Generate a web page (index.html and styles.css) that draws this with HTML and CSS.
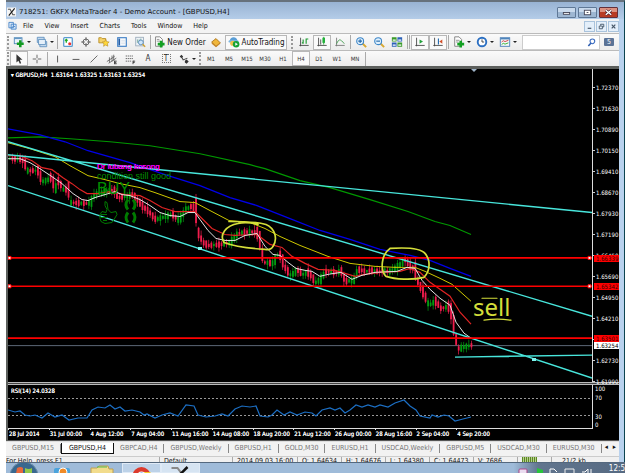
FILE: index.html
```html
<!DOCTYPE html>
<html lang="en">
<head>
<meta charset="utf-8">
<title>718251: GKFX MetaTrader 4</title>
<link rel="stylesheet" href="styles.css">
</head>
<body>
<div class="window">
  <header class="titlebar">
    <svg class="logo" viewBox="0 0 10 10"><rect width="10" height="10" fill="#f6f6f6"/><path d="M1 2h2.5l3 6H9" fill="none" stroke="#555" stroke-width="1.2"/><path d="M8.5 1L2 9" stroke="#111" stroke-width="1.2"/></svg>
    <h1>718251: GKFX MetaTrader 4 - Demo Account - [GBPUSD,H4]</h1>
    <div class="winbtns">
      <button aria-label="Minimize"><svg viewBox="0 0 18 10"><rect x="5.5" y="5" width="7" height="2" fill="#fff" stroke="#445"/></svg></button>
      <button aria-label="Maximize"><svg viewBox="0 0 18 10"><rect x="5.5" y="2.500" width="7" height="5" fill="#fff" stroke="#445"/><rect x="8" y="4.500" width="2" height="1" fill="#445"/></svg></button>
      <button class="close" aria-label="Close"><svg viewBox="0 0 18 10"><path d="M6 2.500l6 5M12 2.500l-6 5" stroke="#423" stroke-width="3"/><path d="M6 2.500l6 5M12 2.500l-6 5" stroke="#fff" stroke-width="1.600"/></svg></button>
    </div>
  </header>
  <div class="client">
    <nav class="menu">
      <svg class="logo" viewBox="0 0 10 10"><path d="M1 1h5v6H1zM3.500 3h5.500v5.500H3.500z" fill="#dcebfa" stroke="#4a86c8"/><path d="M4.500 7l1.500-2 2 1" stroke="#4a86c8" fill="none"/></svg>
      <button>File</button><button>View</button><button>Insert</button><button>Charts</button><button>Tools</button><button>Window</button><button>Help</button>
      <div class="mdi">
        <button aria-label="Minimize chart"><svg viewBox="0 0 10 10"><path d="M3 7h4" stroke="#456" stroke-width="1.300"/></svg></button>
        <button aria-label="Restore chart"><svg viewBox="0 0 10 10"><path d="M4 4V2.500h3.500V5.500H6.500M2.500 4.500h3.500v3H2.500z" stroke="#456" fill="none"/></svg></button>
        <button aria-label="Close chart"><svg viewBox="0 0 10 10"><path d="M3 3l4 4M7 3L3 7" stroke="#456" stroke-width="1.300"/></svg></button>
      </div>
    </nav>
    <div class="toolbar">
      <i class="grip"></i>
      <button class="tool drop" aria-label="New chart"><svg viewBox="0 0 14 14"><rect x="1.500" y="2" width="9" height="7" fill="#e8f2fb" stroke="#4a86b8"/><path d="M2 3h8" stroke="#4a86b8"/><path d="M8.500 5v8M4.500 9h8" stroke="#129a22" stroke-width="3"/></svg></button>
      <button class="tool drop" aria-label="Profiles"><svg viewBox="0 0 14 14"><path d="M1.500 1.500h8v6h-8zM4.500 6.500h8v6h-8z" fill="#c9ddf0" stroke="#5c8fbd"/><path d="M3 4h8v6H3z" fill="#e5f0fa" stroke="#5c8fbd"/></svg></button>
      <i class="sep"></i>
      <button class="tool" aria-label="Market Watch"><svg viewBox="0 0 14 14"><rect x="2" y="2" width="10" height="10" rx="1" fill="#fff" stroke="#5b9bd0" stroke-width="1.500"/><path d="M5 8V4M3.500 5.500L5 4l1.500 1.500" stroke="#2a2" stroke-width="1.500" fill="none"/><circle cx="9" cy="9" r="1.800" fill="#e33"/></svg></button>
      <button class="tool" aria-label="Data Window"><svg viewBox="0 0 14 14"><circle cx="7" cy="7" r="3.500" fill="none" stroke="#555"/><path d="M7 1.500v4M7 8.500v4M1.500 7h4M8.500 7h4" stroke="#555" stroke-width="1.200"/></svg></button>
      <button class="tool" aria-label="Navigator"><svg viewBox="0 0 14 14"><path d="M1 2h3l1 1h4v5H1z" fill="#f5d26a" stroke="#b78a20"/><path d="M9 4l1.200 2.600 2.800.4-2 2 .5 2.900L9 10.500 6.500 12l.5-3-2-2 2.800-.4z" fill="#ffd83a" stroke="#b78a20" stroke-width=".7"/></svg></button>
      <button class="tool" aria-label="Terminal"><svg viewBox="0 0 14 14"><rect x="2" y="2" width="10" height="10" fill="#fff" stroke="#3a7cc4" stroke-width="1.300"/><path d="M3.800 3v8" stroke="#245ea6" stroke-width="2"/><path d="M6 5h5M6 7h5M6 9h5" stroke="#c9d5e2" stroke-width=".8"/></svg></button>
      <button class="tool" aria-label="Strategy Tester"><svg viewBox="0 0 14 14"><rect x="2" y="1.500" width="9" height="10" fill="#eef3f8" stroke="#9aabba"/><path d="M4 8V4M6 9V4M8 7V3" stroke="#7a9"/><circle cx="8" cy="7.500" r="2.800" fill="#cfe6fa" stroke="#5588b8"/><path d="M10 9.500l3 3" stroke="#d0a030" stroke-width="1.600"/></svg></button>
      <i class="sep"></i>
      <button class="tool wide"><svg viewBox="0 0 14 14"><path d="M3 1h5l3 3v8H3z" fill="#fff" stroke="#777"/><path d="M4.500 4h3M4.500 6h4" stroke="#888"/><path d="M9.500 5.500v8M5.500 9.500h8" stroke="#12a022" stroke-width="3"/></svg>New Order</button>
      <button class="tool" aria-label="MetaEditor"><svg viewBox="0 0 14 14"><path d="M2 7l5-4 5 5-5 4z" fill="#f0b63a" stroke="#a8701a"/><path d="M2 7v2l5 4 5-4V8l-5 4z" fill="#c88420"/></svg></button>
      <button class="tool auto on"><svg viewBox="0 0 14 14"><path d="M2 6c0-6 9-6 9 0z" fill="#5a9ed6"/><ellipse cx="6.500" cy="6.300" rx="6" ry="1.700" fill="#79b5e3"/><circle cx="5.500" cy="8.500" r="3" fill="#edc24c"/><circle cx="9.500" cy="9.500" r="3.800" fill="#16a333"/><path d="M8.500 7.500v4l3-2z" fill="#fff"/></svg>AutoTrading</button>
      <i class="grip gap"></i>
      <button class="tool" aria-label="Bar chart"><svg viewBox="0 0 14 14"><path d="M3 2v10M1.500 11h11" stroke="#444"/><path d="M6 4v5M6 8H4.500M9.500 3v6M9.500 3.500H12" stroke="#1b9a2e" stroke-width="1.300"/></svg></button>
      <button class="tool on" aria-label="Candlesticks"><svg viewBox="0 0 14 14"><path d="M3 2v10M1.500 11h11M5.500 4v6" stroke="#444"/><path d="M9 1v9" stroke="#1b9a2e"/><rect x="7.500" y="2" width="3" height="6" fill="#22b13a"/></svg></button>
      <button class="tool" aria-label="Line chart"><svg viewBox="0 0 14 14"><path d="M3 2v10M1.500 11h11" stroke="#777"/><path d="M3 9c3-6 4-6 9 0" fill="none" stroke="#3a9a48"/></svg></button>
      <i class="sep"></i>
      <button class="tool" aria-label="Zoom in"><svg viewBox="0 0 14 14"><path d="M8.500 8.500L13 13" stroke="#d8a830" stroke-width="2.200"/><circle cx="6" cy="6" r="4" fill="#dff0fd" stroke="#3c86c8" stroke-width="1.300"/><path d="M6 3.800v4.400M3.800 6h4.400" stroke="#2468a8" stroke-width="1.300"/></svg></button>
      <button class="tool" aria-label="Zoom out"><svg viewBox="0 0 14 14"><path d="M8.500 8.500L13 13" stroke="#d8a830" stroke-width="2.200"/><circle cx="6" cy="6" r="4" fill="#dff0fd" stroke="#3c86c8" stroke-width="1.300"/><path d="M3.800 6h4.400" stroke="#2468a8" stroke-width="1.300"/></svg></button>
      <button class="tool" aria-label="Tile windows"><svg viewBox="0 0 14 14"><path d="M1 1.500h5.500v5H1zM7.500 7.500H13v5H7.500z" fill="#3a9a2a"/><path d="M7.500 1.500H13v5H7.500zM1 7.500h5.500v5H1z" fill="#2c62b8"/><path d="M2 4h3.500v1.500H2zM8.500 4H12v1.500H8.500zM2 10h3.500v1.500H2zM8.500 10H12v1.500H8.500z" fill="#fff"/></svg></button>
      <i class="sep dbl"></i>
      <button class="tool on" aria-label="Auto scroll"><svg viewBox="0 0 14 14"><path d="M3 2v10M1.500 11h11" stroke="#444"/><path d="M6.500 4v5l4-2.500z" fill="#22a13a"/></svg></button>
      <button class="tool on" aria-label="Chart shift"><svg viewBox="0 0 14 14"><path d="M3 2v10M1.500 11h11" stroke="#444"/><path d="M7.500 3v7" stroke="#246cb0" stroke-width="1.300"/><path d="M12 4v5L8.500 6.500z" fill="#d2502a"/></svg></button>
      <i class="sep"></i>
      <button class="tool drop" aria-label="Indicators"><svg viewBox="0 0 14 14"><path d="M2 1h5l3 3v8H2z" fill="#fff" stroke="#777"/><path d="M3.500 5h4M3.500 7h3" stroke="#888"/><path d="M9 5.500v8M5 9.500h8" stroke="#12a022" stroke-width="3"/></svg></button>
      <button class="tool drop" aria-label="Periods"><svg viewBox="0 0 14 14"><circle cx="7" cy="7" r="5" fill="#fff" stroke="#2b6fc2" stroke-width="2.200"/><path d="M7 4v3h2.500" fill="none" stroke="#333"/></svg></button>
      <button class="tool drop" aria-label="Templates"><svg viewBox="0 0 14 14"><rect x="1.500" y="2" width="11" height="10" fill="#f4f8fc" stroke="#3f79b5"/><path d="M2 3.200h10" stroke="#3f79b5" stroke-width="1.500"/><path d="M3 7l2-1.500 2 1L11 5" stroke="#c33" fill="none"/><path d="M3 10l2-1.500 2 1L11 8" stroke="#2a2" fill="none"/></svg></button>
      <label class="search"><input type="text" aria-label="Search"><svg viewBox="0 0 10 10"><path d="M4.500 5.500L1.500 9" stroke="#2c5cb0" stroke-width="1.700"/><circle cx="6" cy="3.700" r="2.600" fill="#fff" stroke="#3c6cc0" stroke-width="1.200"/></svg></label>
      <button class="news" aria-label="Messages">5</button>
    </div>
    <div class="toolbar second">
      <i class="grip"></i>
      <button class="tool on" aria-label="Cursor"><svg viewBox="0 0 14 14"><path d="M4 1.500l7 6.500H8l1.500 4-1.500.6L6.300 9 4 11z" fill="#333"/></svg></button>
      <button class="tool" aria-label="Crosshair"><svg viewBox="0 0 14 14"><path d="M7 2v4M7 8v4M2 7h4M8 7h4" stroke="#555"/></svg></button>
      <i class="sep"></i>
      <button class="tool" aria-label="Vertical line"><svg viewBox="0 0 14 14"><path d="M6.500 3v8" stroke="#444"/></svg></button>
      <button class="tool" aria-label="Horizontal line"><svg viewBox="0 0 14 14"><path d="M3 7.500h8" stroke="#444"/></svg></button>
      <button class="tool" aria-label="Trendline"><svg viewBox="0 0 14 14"><path d="M3 11l8-8" stroke="#555"/></svg></button>
      <button class="tool" aria-label="Channel"><svg viewBox="0 0 14 14"><path d="M1 10l9-6M3 12l9-6M4 5v6M7 3v7M9 2v7" stroke="#555" stroke-width=".9"/><path d="M10 9.500h2.500M10 11h2M10 12.500h2.500M10 9v4" stroke="#222" stroke-width=".9"/></svg></button>
      <button class="tool" aria-label="Fibonacci"><svg viewBox="0 0 14 14"><path d="M2 3.500h9M2 6.500h9M2 9.500h7" stroke="#555" stroke-dasharray="1.500 .8"/><path d="M10.500 9v4M10.500 9.500h2.500M10.500 11h2" stroke="#222" stroke-width=".9"/></svg></button>
      <button class="tool glyph">A</button>
      <button class="tool glyph"><span class="tbox">T</span></button>
      <button class="tool drop" aria-label="Arrows"><svg viewBox="0 0 14 14"><path d="M2 4l2-2 2 2-2 2zM8 9l2-1.500L12.500 10 10 12.500 8 11z" fill="#333"/><path d="M4 4l2 4 5-2" fill="none" stroke="#444" stroke-width="1.200"/></svg></button>
      <i class="grip"></i>
      <button class="tool tf">M1</button><button class="tool tf">M5</button><button class="tool tf">M15</button><button class="tool tf">M30</button><button class="tool tf">H1</button><button class="tool tf on">H4</button><button class="tool tf">D1</button><button class="tool tf">W1</button><button class="tool tf">MN</button>
      <i class="sep"></i>
    </div>

    <main class="chart">
      <section class="plot">
        <svg viewBox="8 69 584 314" preserveAspectRatio="none" fill="none">
          <path d="M8 346.500H592" stroke="#5d6876"/>
          <g id="candles"></g>
          <path d="M8 138L40 137L70 139L110 142L150 146L200 154L250 165L265 169L300 181L330 188L370 200L408 212L435 222L450 226L471 235" stroke="#009800" stroke-width="1.200"/>
          <path d="M8 129L40 135L65 142L88 151L130 163L165 175L200 186L230 198L257 206L290 219L320 231L350 240L380 250L410 256L430 261L450 269L471 277" stroke="#0000e8" stroke-width="1.300"/>
          <path d="M8 143L30 149L55 157L70 166L88 176L105 180L120 184L140 188L155 193L180 202L195 203L210 211L229 221L250 223L265 229L280 237L300 246L328 257L350 264L375 267L395 268L415 268L425 272L440 279L452 285L471 302" stroke="#cfc800"/>
          <path d="M8 156L20 156L32 161L42 168L52 170L63 178L72 184L80 190L87 194L98 194L110 192L125 195L140 196L150 201L162 208L175 212L195 212L203 220L212 229L225 235L235 236L257 235L270 245L282 248L292 257L305 264L318 270L335 271L345 274L355 277L365 275L380 273L400 272L410 269L420 273L430 283L440 290L450 297L460 313L471 325" stroke="#e02424" stroke-width="1.200"/>
          <path d="M8 159L20 159L30 163L40 169L52 177L62 184L73 194L82 200L88 201L95 198L105 195L115 192L122 195L130 196L140 200L150 206L160 213L170 216L180 217L188 213L195 213L200 220L208 231L216 239L225 241L235 241L245 236L257 234L265 247L273 255L280 256L288 263L296 269L305 271L312 272L320 277L328 275L341 273L352 280L362 276L375 273L397 272L407 268L415 269L422 281L430 290L440 299L450 306L456 323L464 334L471 339" stroke="#e4e4e4"/>
          <path d="M8 142L592 317M8 155L592 213M8 186L592 379M455 358L592 356" stroke="#48e6dc" stroke-width="1.400"/>
          <path d="M8 258.500H592M8 287H592M8 339H592" stroke="#f00" stroke-width="1.600"/>
          <path d="M8 257h3v3H8zM8 285.500h3v3H8zM588 257h3v3h-3zM588 285.500h3v3h-3z" fill="#fff" stroke="#f00"/>
          <path d="M198 247.500h4v3h-4zM532 359h4v3h-4z" fill="#7ff6ee"/>
          <path d="M471 69h6l-3 3z" fill="#9fb4c8"/>
          <g stroke="#d4de3a" stroke-width="1.700" stroke-linecap="round">
            <path d="M229 222C240 222 256 222 266 225C275 229 278 239 273 247Q271 251 265 250C250 249 232 246 224 243C219 235 226 226 238 224Q247 222 258 225"/>
            <path d="M390 249C405 248 420 248 425 254C431 261 430 272 424 278C412 281 395 280 386 277C380 271 381 255 390 249Z"/>
            <path d="M482 299H497M484 321Q497 319 511 321" stroke-width="1.200"/>
          </g>
          <path d="M105 202l2 1l1 7l3 3l5-1l1 3l-3 5l-2 3l-7 1l-4-2l-1-3v-4l2-3l4 1l1-3l-2-4zM101 215h6M101 218h6M103 221h4" stroke="#007a00"/>
          <path d="M128 200q-4 5 0 10M133 200q4 5 0 10M128 213q-4 5 0 10M133 213q4 5 0 10" stroke="#007a00" stroke-width="3"/>
        </svg>
        <p class="quote"><b>▾</b> GBPUSD,H4&nbsp; 1.63164 1.63325 1.63163 1.63254</p>
        <p class="note lubang">Dr lubang kosong</p>
        <p class="note cond">condition still good</p>
        <p class="note buy">BUY</p>
        <p class="note sell">sell</p>
      </section>
      <div class="prices">
        <span>1.72370</span><span>1.71630</span><span>1.70890</span><span>1.70150</span><span>1.69410</span><span>1.68670</span><span>1.67930</span><span>1.67190</span><span>1.66450</span><span>1.65690</span><span>1.64950</span><span>1.64210</span><span></span><span>1.62730</span><span>1.61990</span>
        <em class="tag r1">1.66339</em><em class="tag r2">1.65342</em><em class="tag r3">1.63501</em><em class="tag now">1.63254</em>
      </div>
      <div class="divider"></div>
      <section class="rsi">
        <svg viewBox="8 386 584 43" preserveAspectRatio="none" fill="none">
          <path d="M8 399.500H592M8 416.500H592" stroke="#999" stroke-dasharray="2 2"/>
          <path d="M8 411L15 413L20 412L25 416L30 417L35 416L42 419L48 414L55 418L62 416L69 421L78 419L87 419L92 411L98 408L105 409L110 406L115 410L120 408L125 412L132 411L140 413L144 416L147 415L155 419L162 416L170 414L178 417L186 406L194 407L198 416L206 418L215 417L222 415L228 417L235 410L242 407L250 408L256 407L260 417L268 418L272 416L277 411L284 416L290 413L297 416L305 413L312 414L316 417L322 411L330 409L335 411L340 409L345 414L350 411L356 406L362 408L368 406L375 408L380 406L388 408L395 404L404 401L410 407L416 411L420 417L430 419L432 416L438 418L444 416L449 417L455 422L463 420L471 418" stroke="#1c6fc4" stroke-width="1.200"/>
        </svg>
        <p class="quote">RSI(14) 24.0328</p>
      </section>
      <div class="levels"><span>100</span><span>70</span><span>30</span><span>0</span></div>
      <div class="times"><span>28 Jul 2014</span><span>31 Jul 00:00</span><span>4 Aug 12:00</span><span>7 Aug 04:00</span><span>11 Aug 16:00</span><span>14 Aug 08:00</span><span>18 Aug 20:00</span><span>21 Aug 12:00</span><span>26 Aug 00:00</span><span>28 Aug 16:00</span><span>2 Sep 04:00</span><span>4 Sep 20:00</span></div>
    </main>

    <nav class="tabs">
      <button>GBPUSD,M15</button><button class="active">GBPUSD,H4</button><button>GBPCAD,H4</button><button>GBPUSD,Weekly</button><button>GBPUSD,H1</button><button>GOLD,M30</button><button>EURUSD,H1</button><button>USDCAD,Weekly</button><button>GBPUSD,M5</button><button>USDCAD,M30</button><button>EURUSD,M30</button>
      <div class="scroll"><button aria-label="Previous tabs">◂</button><button aria-label="Next tabs">▸</button></div>
    </nav>
    <footer class="status">
      <span class="help">For Help, press F1</span><span class="prof">Default</span><span class="date">2014.09.03 16:00</span><span>O: 1.64634</span><span>H: 1.64676</span><span>L: 1.64380</span><span>C: 1.64473</span><span>V: 7686</span><span class="bars"><i></i></span><span class="net">21/2 kb</span>
    </footer>
  </div>
</div>
<div class="taskbar">
  <svg class="orb" viewBox="0 0 34 11"><circle cx="17" cy="13" r="14" fill="#39688f" stroke="#6c8ba6"/><path d="M10 5q4-2 6 0v6h-7z" fill="#e8683c"/><path d="M18 5q4 2 7 0v6h-7z" fill="#93c94a"/></svg>
  <svg class="app" viewBox="0 0 34 11"><rect x="9" y="5" width="16" height="9" rx="2" fill="#4ba3dc"/><circle cx="18" cy="9" r="4" fill="#f08b28" stroke="#fff"/></svg>
  <svg class="app" viewBox="0 0 34 11"><path d="M6 5h6l2-2h9l1 3h4v8H6z" fill="#f2dc8c" stroke="#bfa050"/><path d="M12 4h10" stroke="#5b5"/></svg>
  <span class="running"><svg viewBox="0 0 34 11"><circle cx="17" cy="12" r="9" fill="#dc3a2c"/><path d="M8 11q3-2 5 0z" fill="#3aa648"/><path d="M18 8h8v4h-8z" fill="#f6c92c"/><circle cx="17" cy="12" r="4.500" fill="#fff"/><circle cx="17" cy="12" r="3.500" fill="#3c7ce0"/></svg></span>
  <span class="running lit"><svg viewBox="0 0 34 11"><path d="M8 4h6l6 8" fill="none" stroke="#888" stroke-width="2"/><path d="M24 3l-9 9" stroke="#111" stroke-width="2.500"/></svg></span>
  <div class="tray">
    <svg viewBox="0 0 80 11"><rect x="2" y="6" width="8" height="6" rx="1" fill="#eadcf0" stroke="#a48"/><path d="M20 5l6 2v5h-6z" fill="#28c43c"/><path d="M33 11V6h4l3 3" stroke="#fff" fill="none"/><path d="M48 6h9v6h-9z" fill="none" stroke="#eee"/><path d="M65 9h3l3-3v6M74 6v5" stroke="#fff" fill="none"/></svg>
    <time>12:5</time>
  </div>
</div>
<script src="chart.js"></script>
</body>
</html>
```
FILE: chart.js
```js
// Mid-price path as [x, y] in plot units; candles are sampled along it.
const path = [[9,159],[20,159],[24,163],[26,171],[38,171],[41,182],[48,180],[51,176],[54,191],[58,180],[62,190],[68,190],[70,203],[85,204],[90,203],[94,195],[105,192],[113,190],[118,198],[125,197],[132,195],[140,205],[148,212],[155,220],[165,217],[172,215],[178,221],[185,210],[190,207],[195,209],[197,232],[202,243],[208,246],[220,245],[230,243],[237,234],[250,232],[258,234],[260,248],[263,263],[273,264],[276,256],[280,256],[284,268],[290,276],[297,271],[302,275],[308,273],[315,283],[320,280],[325,272],[335,273],[341,272],[344,282],[353,281],[357,270],[365,272],[370,271],[378,272],[390,272],[400,265],[404,260],[410,267],[415,271],[417,282],[423,294],[428,306],[435,302],[440,309],[445,308],[449,307],[452,320],[454,336],[458,350],[463,348],[471,346]];
const SVG = "http://www.w3.org/2000/svg";
const layer = document.getElementById("candles");
const mid = x => {
  const i = Math.max(1, path.findIndex(p => p[0] >= x));
  const [a, b] = [path[i - 1], path[i]];
  return a[1] + (b[1] - a[1]) * (x - a[0]) / (b[0] - a[0]);
};
const shape = (x, y, w, h, fill) => {
  const r = document.createElementNS(SVG, "rect");
  Object.entries({ x, y, width: w, height: h, fill }).forEach(([k, v]) => r.setAttribute(k, v));
  layer.append(r);
};
for (let n = 0, x = 9; x < 471; n++, x += 2.55) {
  const y = mid(x), step = mid(Math.min(x + 2.5, 471)) - y;
  const body = 2 + Math.abs(step) + (n * 7 % 5);
  const wick = body + 2 + (n * 11 % 7);
  const up = step < -0.6 || (Math.abs(step) < 1 && n * 5 % 7 < 2);
  const color = up ? "#009a10" : "#f01c4c";
  shape(x + 0.5, y - wick / 2 + (n % 3) - 1, 0.7, wick, color);
  shape(x, y - body / 2, 1.8, body, color);
}
```
FILE: styles.css
```css
* { box-sizing: border-box; margin: 0; padding: 0; }
body {
  height: 100vh; overflow: hidden; display: flex; flex-direction: column;
  background: #fff; color: #111;
  font: 7px/9px "DejaVu Sans Condensed", "DejaVu Sans", sans-serif;
}
button { font: inherit; color: inherit; background: none; border: 0; white-space: nowrap; }
svg { display: block; }
.window {
  flex: 1; min-height: 0; margin-left: 6px; display: flex; flex-direction: column;
  border-top: 2px solid #66717c; border-right: 1px solid #0d4450; background: #b9d2ee;
}
.titlebar {
  height: 17px; flex: none; display: flex; align-items: center; gap: 3px; padding: 3px 6px 0 1px;
  background: linear-gradient(#98b3d3, #b4cce8);
}
.logo { width: 9px; height: 10px; }
.titlebar h1 { flex: 1; font: 7px/10px "DejaVu Sans", sans-serif; white-space: nowrap; }
.winbtns { display: flex; gap: 2px; }
.winbtns button {
  width: 19px; height: 11px; border: 1px solid #5f7896; border-radius: 1px;
  background: linear-gradient(#c8d9ec 50%, #9db6d2 50%);
}
.winbtns .close { border-color: #64303a; background: linear-gradient(#dc9080 50%, #b83a24 50%); }
.winbtns svg { width: 100%; height: 9px; }
.client { flex: 1; min-height: 0; display: flex; flex-direction: column; margin-right: 5px; background: #f0f0f0; }
.menu { height: 14px; flex: none; display: flex; align-items: center; padding-left: 2px; background: #f3f3f3; }
.menu > button { padding: 0 5px 0 6px; }
.mdi { margin-left: auto; display: flex; gap: 1px; }
.mdi button { width: 11px; height: 11px; border: 1px solid #a9c3dc; background: #e4effa; }
.mdi svg { width: 9px; height: 9px; }
.toolbar { height: 17px; flex: none; display: flex; align-items: center; border-top: 1px solid #bbb; background: linear-gradient(#fafafa, #ececec); }
.second { height: 16px; }
.grip { width: 2px; height: 13px; margin: 0 1px; border-left: 2px dotted #999; flex: none; }
.gap { margin: 0 2px 0 4px; }
.sep { width: 1px; height: 14px; margin: 0 1px; background: #aaa; flex: none; }
.dbl { width: 3px; background: none; border: solid #aaa; border-width: 0 1px; }
.tool { width: 18px; height: 15px; flex: none; display: flex; align-items: center; justify-content: center; }
.tool svg { width: 12px; height: 12px; flex: none; }
.on { border: 1px solid #b8b8b8; background: #fafafa; }
.drop { width: 23px; gap: 2px; }
.drop::after { content: ""; border: 2px solid transparent; border-top-color: #222; border-bottom: 0; }
.wide { width: 55px; gap: 2px; font-size: 8px; }
.auto { width: 62px; gap: 2px; font-size: 8px; }
.tf { font-size: 6px; color: #333; }
.glyph { font-size: 8px; color: #333; }
.tbox { border: 1px dotted #777; width: 9px; height: 9px; line-height: 8px; }
.search { flex: 1; min-width: 0; margin-left: 3px; height: 15px; display: flex; align-items: center; padding-right: 3px; background: #fff; border: 1px solid #ccc; }
.search input { flex: 1; width: 0; min-width: 0; border: 0; background: none; font: inherit; outline: 0; }
.search svg { width: 9px; height: 9px; flex: none; }
.news { width: 10px; height: 8px; margin: 0 5px 0 4px; flex: none; background: #5b7396; color: #fff; line-height: 8px; border-radius: 1px; }

.chart {
  flex: 1; min-height: 0; display: grid;
  grid-template: minmax(0, 1fr) 3px 43px 13px / minmax(0, 1fr) 26px;
  background: #000; color: #fff; border: solid #5c5f5c; border-width: 3px 0 0 2px;
}
.plot, .rsi { position: relative; border-right: 1px solid #ddd; }
.plot svg, .rsi svg { position: absolute; width: 100%; height: 100%; }
.quote { position: absolute; left: 3px; top: 1px; font-size: 6px; white-space: nowrap; text-shadow: 0 0 #fff; }
.note { position: absolute; white-space: nowrap; font-family: "Liberation Sans", sans-serif; }
.lubang { left: 89px; top: 93px; color: #f0f; font-size: 8px; text-shadow: 0 0 #f0f; }
.cond { left: 89px; top: 103px; color: #009000; font-size: 9px; }
.buy { left: 89px; top: 112px; color: #009000; font-size: 16px; line-height: 15px; }
.sell { left: 465px; top: 223px; color: #d4de3a; font: 24px/30px "Noto Sans", sans-serif; }
.prices { position: relative; padding-top: 8px; display: flex; flex-direction: column; font-size: 6px; }
.prices span { height: 21px; line-height: 21px; flex: none; }
.prices span:last-of-type { height: 17px; }
.prices span::before { content: ""; display: inline-block; width: 2px; height: 1px; margin-right: 1px; vertical-align: 2px; background: #ccc; }
.tag { position: absolute; left: 1px; right: 0; height: 7px; padding-left: 2px; line-height: 7px; font-style: normal; background: #f00; color: #300; }
.r1 { top: 186px; }
.r2 { top: 214px; }
.r3 { top: 266px; }
.now { top: 273px; background: #fff; color: #000; }
.divider { grid-column: 1 / -1; border: solid #bbb; border-width: 1px 0; background: #444; }
.levels { padding-left: 2px; font-size: 6px; display: grid; grid-template-rows: 9px 17px 10px 7px; line-height: 8px; }
.levels span:nth-child(3) { align-self: end; }
.times {
  grid-column: 1 / -1; display: grid; grid-template-columns: repeat(12, minmax(0, 1fr));
  padding-right: 122px; font-size: 6px; line-height: 11px; white-space: nowrap;
  border-bottom: 1px solid #555; background: linear-gradient(90deg, #ddd, #ddd) 0 0 / calc(100% - 26px) 1px no-repeat;
}
.times span { text-shadow: 0 0 #fff; border-left: 1px solid transparent; border-image: linear-gradient(#ddd 20%, transparent 20%) 1; }

.tabs { height: 15px; flex: none; display: flex; align-items: flex-start; padding-top: 1px; background: #f2f2f2; border-top: 1px solid #ddd; color: #777; }
.tabs > button { height: 11px; padding: 0 6px; border-right: 1px solid transparent; border-image: linear-gradient(transparent 20%, #888 20%, #888 80%, transparent 80%) 1; }
.tabs .active { padding: 0 7px; background: #fff; color: #111; border: 1px solid #111; border-top: 0; border-image: none; }
.scroll { margin-left: auto; display: flex; gap: 5px; padding-right: 3px; color: #111; }
.status { height: 6px; flex: none; overflow: hidden; display: flex; line-height: 8px; border-top: 1px solid #ccc; white-space: nowrap; }
.status span { width: 44px; padding-left: 4px; border-right: 1px solid #aaa; }
.status .help { width: 154px; padding-left: 0; }
.status .prof { width: 73px; }
.status .date { width: 65px; }
.status .bars { width: 34px; }
.bars i { display: block; width: 15px; height: 6px; background: repeating-linear-gradient(90deg, #5a8a20 0 1px, #b8cc90 1px 2px); }
.status .net { border: 0; flex: 1; padding-left: 10px; }
.taskbar { height: 11px; flex: none; margin-left: 6px; display: flex; overflow: hidden; border-top: 1px solid #54687e; background: linear-gradient(90deg, #9fbbd9 0 82%, #61758e 86%, #566a82); }
.taskbar svg { height: 11px; }
.orb { width: 36px; }
.app { width: 40px; }
.running { width: 39px; border: 1px solid #dfeaf6; background: #bdd2e8; }
.lit { background: #d6e4f2; }
.running svg { width: 100%; }
.tray { margin-left: auto; display: flex; gap: 12px; color: #fff; font-size: 8px; }
.tray svg { width: 80px; }
.tray time { line-height: 12px; }
```
